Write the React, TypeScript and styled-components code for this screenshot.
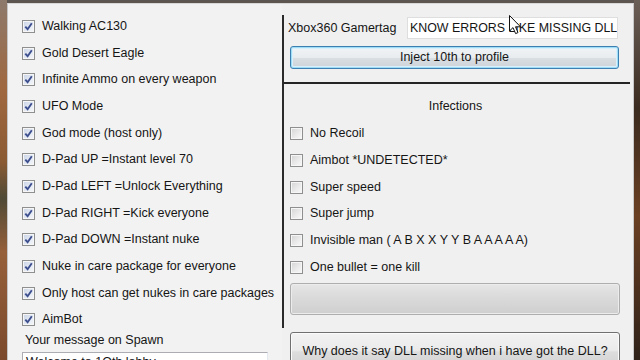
import React from "react";
import styled, { createGlobalStyle } from "styled-components";

const Global = createGlobalStyle`
  html, body { margin: 0; padding: 0; background: #2b2119; }
  * { box-sizing: border-box; }
`;

const Screen = styled.div`
  width: 640px;
  height: 360px;
  overflow: hidden;
  display: flex;
  background: linear-gradient(180deg, #5d5550 0px, #5d5550 3px, transparent 3px);
  font-family: "Liberation Sans", Arial, sans-serif;
  font-size: 12.5px;
  color: #151515;
`;

const DesktopLeft = styled.div`
  width: 7px;
  flex: none;
  background: linear-gradient(180deg, #8d7a6c 0%, #a0683f 25%, #8a5a33 45%, #4f4a36 55%, #96603a 70%, #7b4a2c 100%);
`;

const DesktopRight = styled.div`
  width: 6px;
  flex: none;
  background: linear-gradient(180deg, #6b6058 0%, #3a2a1f 30%, #6a3f22 60%, #2e2119 100%);
`;

const Window = styled.div`
  flex: 1;
  margin-top: 3px;
  background: #f0f0f0;
  border-left: 1px solid #c4c4c4;
  border-top: 1px solid #d8d8d8;
  border-right: 1px solid #c8c8c8;
  display: grid;
  grid-template-columns: 274px 1fr;
  position: relative;
`;

const LeftCol = styled.div`
  padding: 9px 0 0 14px;
  display: flex;
  flex-direction: column;
  background: #f2f2f2;
`;

const Row = styled.div`
  height: 26.7px;
  display: flex;
  align-items: center;
  gap: 7px;
  white-space: nowrap;
`;

const BoxWrap = styled.span<{ $checked?: boolean }>`
  width: 13px;
  height: 13px;
  flex: none;
  border: 1px solid #8e8f8f;
  display: flex;
  align-items: center;
  justify-content: center;
  background: ${(p) =>
    p.$checked
      ? "linear-gradient(135deg, #c9d3e6 0%, #e6ebf4 60%, #f4f6fa 100%)"
      : "linear-gradient(135deg, #d4d4d4 0%, #ececec 60%, #f9f9f9 100%)"};
  box-shadow: inset 0 0 0 1px #f6f6f6;
`;

const Label = styled.span`
  line-height: 15px;
`;

const Check = ({ checked }: { checked?: boolean }) => (
  <BoxWrap $checked={checked}>
    {checked && (
      <svg width="9" height="9" viewBox="0 0 9 9">
        <path d="M1.3 4.6 L3.6 7.2 L7.8 1.2" fill="none" stroke="#3d4f8e" strokeWidth="1.9" strokeLinejoin="miter" />
      </svg>
    )}
  </BoxWrap>
);

const SpawnLabel = styled.div`
  line-height: 15px;
  margin-left: 3px;
`;

const SpawnInput = styled.div`
  margin-top: 4px;
  width: 246px;
  height: 22px;
  background: #ffffff;
  border: 1px solid #abadb3;
  border-right-color: #e3e9ef;
  padding: 2px 0 0 3px;
  line-height: 15px;
  white-space: nowrap;
`;

const RightCol = styled.div`
  padding: 11px 3px 0 0;
  display: flex;
  flex-direction: column;
`;

const Frame = styled.div`
  border-left: 2px solid #2a2a2a;
  display: flex;
  flex-direction: column;
  padding-bottom: 13px;
`;

const TopSection = styled.div`
  height: 69px;
  border-bottom: 2px solid #242424;
  padding: 2px 11px 0 4px;
  display: flex;
  flex-direction: column;
`;

const GamerRow = styled.div`
  height: 22px;
  display: flex;
  align-items: center;
  justify-content: space-between;
  position: relative;
`;

const GamerInput = styled.div`
  width: 211px;
  height: 22px;
  margin-right: 1px;
  background: #fff;
  border: 1px solid #dedede;
  font-size: 12.4px;
  padding: 3px 0 0 2px;
  line-height: 15px;
  white-space: nowrap;
  overflow: hidden;
`;

const Cursor = styled.svg`
  position: absolute;
  left: 221px;
  top: -2px;
`;

const InjectButton = styled.div`
  margin: 7px 0 0 2px;
  height: 23px;
  border: 1px solid #3c7fb1;
  border-radius: 3px;
  box-shadow: inset 0 0 0 1px #9fdcf6, inset 0 0 0 2px #d8f0fb;
  background: linear-gradient(180deg, #f1f4f6 0%, #e8ecef 50%, #d9dfe3 51%, #cdd3d8 100%);
  display: flex;
  align-items: center;
  justify-content: center;
  line-height: 15px;
`;

const SectionTitle = styled.div`
  margin-top: 14.5px;
  text-align: center;
  line-height: 15px;
  padding-right: 3px;
`;

const RightList = styled.div`
  margin-top: 7px;
  padding-left: 6px;
  display: flex;
  flex-direction: column;
`;

const GrayBar = styled.div`
  margin: 2px 10px 0 6px;
  height: 32px;
  border: 1px solid #aeaeae;
  border-radius: 3px;
  background: linear-gradient(180deg, #e6e6e6 0%, #dadada 45%, #cfcfcf 100%);
  box-shadow: inset 0 0 0 1px #ececec;
`;

const WhyButton = styled.div`
  margin: 4px 10px 0 8px;
  height: 40px;
  border: 1px solid #707070;
  border-radius: 3px;
  box-shadow: inset 0 0 0 1px #fbfbfb;
  background: linear-gradient(180deg, #f2f2f2 0%, #ebebeb 45%, #dddddd 50%, #cfcfcf 100%);
  display: flex;
  justify-content: center;
  padding-top: 11px;
  line-height: 15px;
  white-space: nowrap;
  font-size: 12.5px;
`;

const leftItems = [
  "Walking AC130",
  "Gold Desert Eagle",
  "Infinite Ammo on every weapon",
  "UFO Mode",
  "God mode (host only)",
  "D-Pad UP =Instant level 70",
  "D-Pad LEFT =Unlock Everything",
  "D-Pad RIGHT =Kick everyone",
  "D-Pad DOWN =Instant nuke",
  "Nuke in care package for everyone",
  "Only host can get nukes in care packages",
  "AimBot",
];

const rightItems = [
  "No Recoil",
  "Aimbot *UNDETECTED*",
  "Super speed",
  "Super jump",
  "Invisible man ( A B X X Y Y B A A A A A)",
  "One bullet = one kill",
];

export default function App() {
  return (
    <>
      <Global />
      <Screen>
        <DesktopLeft />
        <Window>
          <LeftCol>
            {leftItems.map((t) => (
              <Row key={t}>
                <Check checked />
                <Label>{t}</Label>
              </Row>
            ))}
            <SpawnLabel>Your message on Spawn</SpawnLabel>
            <SpawnInput>Welcome to 1Oth lobby</SpawnInput>
          </LeftCol>
          <RightCol>
            <Frame>
              <TopSection>
                <GamerRow>
                  <Label>Xbox360 Gamertag</Label>
                  <GamerInput>KNOW ERRORS LIKE MISSING DLL</GamerInput>
                  <Cursor width="13" height="21" viewBox="0 0 13 21">
                    <path d="M0.5 0.5 L0.5 16 L4 12.6 L6.6 18.6 L9 17.6 L6.5 11.8 L11.5 11.8 Z" fill="#fff" stroke="#111" strokeWidth="1" strokeLinejoin="round" />
                  </Cursor>
                </GamerRow>
                <InjectButton>Inject 10th to profile</InjectButton>
              </TopSection>
              <SectionTitle>Infections</SectionTitle>
              <RightList>
                {rightItems.map((t) => (
                  <Row key={t}>
                    <Check />
                    <Label>{t}</Label>
                  </Row>
                ))}
              </RightList>
              <GrayBar />
            </Frame>
            <WhyButton>Why does it say DLL missing when i have got the DLL?</WhyButton>
          </RightCol>
        </Window>
        <DesktopRight />
      </Screen>
    </>
  );
}
